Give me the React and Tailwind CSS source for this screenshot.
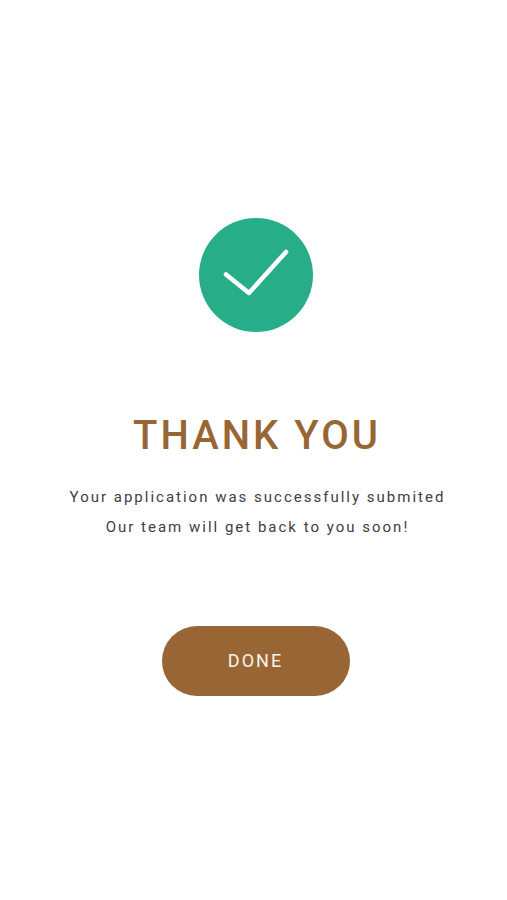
import React from 'react';

const CheckBadge = () => (
  <svg viewBox="0 0 114 114" className="h-[114px] w-[114px]" aria-hidden="true">
    <circle cx="57" cy="57" r="57" fill="#27ae88" />
    <path
      d="M27 56.5 L50 75 L87 34"
      fill="none"
      stroke="#ffffff"
      strokeWidth="4.5"
      strokeLinecap="round"
      strokeLinejoin="round"
    />
  </svg>
);

const App = () => {
  return (
    <main className="flex min-h-screen flex-col items-center bg-white pt-[218px] pr-4 pb-16 pl-5 font-['Roboto',sans-serif]">
      <CheckBadge />

      {/* left padding evens out the tracking after the last letter */}
      <h1 className="mt-20 pl-[3px] text-center text-[40px] leading-12 font-medium tracking-[3px] text-[#986634]">
        THANK YOU
      </h1>

      <p className="mt-[22px] pl-1 text-center text-[15px] leading-[30px] tracking-[2px] text-[#404040]">
        Your application was successfully submited
        <br />
        Our team will get back to you soon!
      </p>

      <button
        type="button"
        className="mt-[84px] h-[70px] w-[188px] rounded-full bg-[#986634] text-lg tracking-[2px] text-[#fbf3ea]"
      >
        DONE
      </button>
    </main>
  );
};

export default App;
